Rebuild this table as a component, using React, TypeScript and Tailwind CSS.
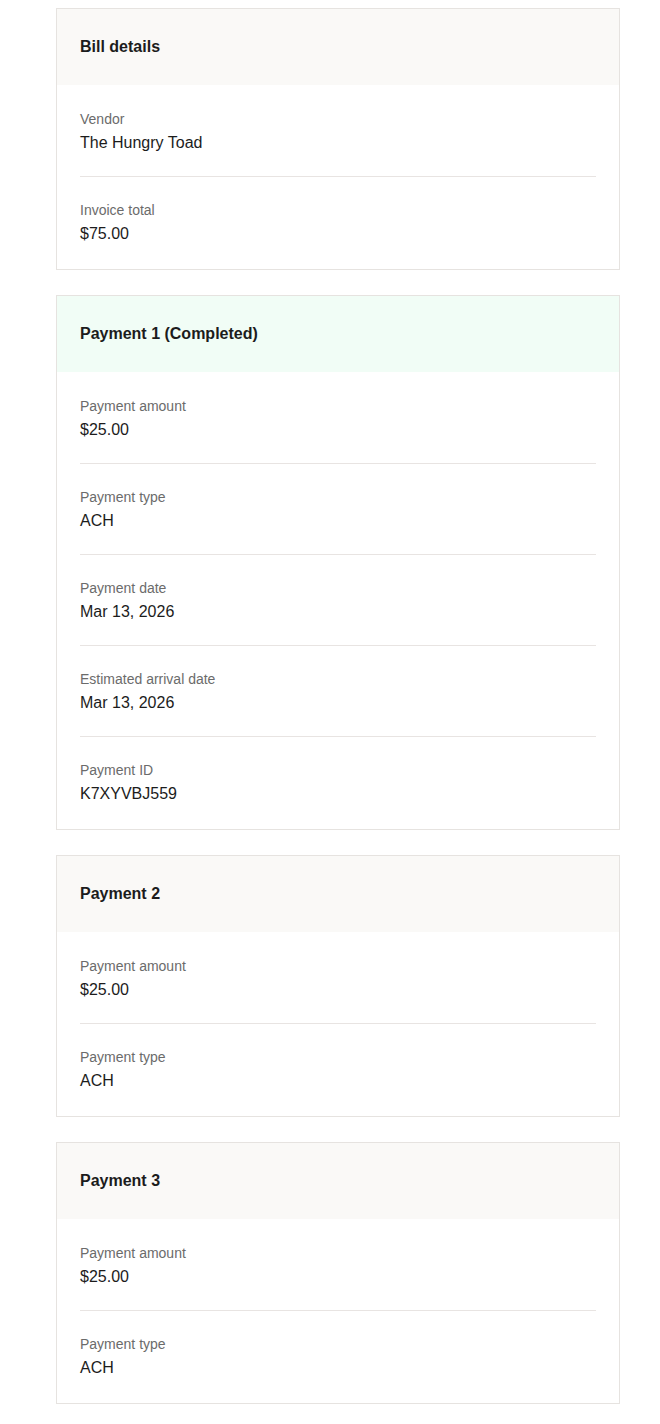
import React from "react";

type Row = { label: string; value: string };
type Card = { title: string; rows: Row[]; green?: boolean };

const cards: Card[] = [
  {
    title: "Bill details",
    rows: [
      { label: "Vendor", value: "The Hungry Toad" },
      { label: "Invoice total", value: "$75.00" },
    ],
  },
  {
    title: "Payment 1 (Completed)",
    green: true,
    rows: [
      { label: "Payment amount", value: "$25.00" },
      { label: "Payment type", value: "ACH" },
      { label: "Payment date", value: "Mar 13, 2026" },
      { label: "Estimated arrival date", value: "Mar 13, 2026" },
      { label: "Payment ID", value: "K7XYVBJ559" },
    ],
  },
  {
    title: "Payment 2",
    rows: [
      { label: "Payment amount", value: "$25.00" },
      { label: "Payment type", value: "ACH" },
    ],
  },
  {
    title: "Payment 3",
    rows: [
      { label: "Payment amount", value: "$25.00" },
      { label: "Payment type", value: "ACH" },
    ],
  },
];

export default function App() {
  return (
    <div
      className="min-h-[1424px] bg-white pt-2 pl-14 w-[660px]"
      style={{ fontFamily: '"Liberation Sans", Arial, sans-serif' }}
    >
      <div className="flex w-[564px] flex-col gap-[25px]">
        {cards.map((c) => (
          <div key={c.title} className="border border-[#e6e3e0] bg-white">
            <div
              className={`flex h-[76px] items-center px-[23px] text-[16px] font-bold text-[#1c1c1c] ${
                c.green ? "bg-[#f1fdf6]" : "bg-[#faf9f7]"
              }`}
            >
              {c.title}
            </div>
            <div className="px-[23px]">
              {c.rows.map((r, i) => {
                const first = i === 0;
                const last = i === c.rows.length - 1;
                return (
                  <div
                    key={r.label}
                    className={`${first ? "pt-6" : "pt-[23px]"} ${
                      last ? "pb-[23px]" : "pb-[21px] border-b border-[#e8e4e2]"
                    }`}
                  >
                    <div className="text-[14px] leading-5 text-[#6b6b6b]">{r.label}</div>
                    <div className="mt-[2px] text-[16px] leading-6 text-[#1c1c1c]">{r.value}</div>
                  </div>
                );
              })}
            </div>
          </div>
        ))}
      </div>
    </div>
  );
}
